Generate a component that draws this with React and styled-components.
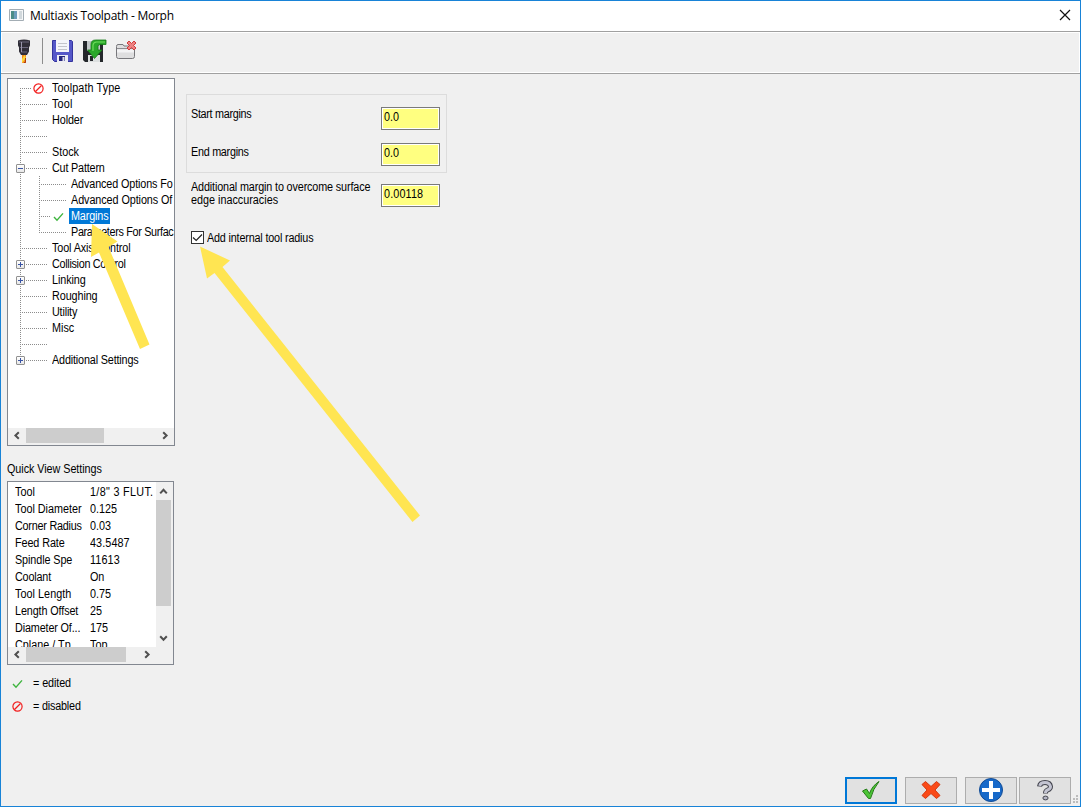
import React from 'react';
import styled, { createGlobalStyle, css } from 'styled-components';

const Global = createGlobalStyle`
  html, body { margin: 0; padding: 0; }
  body { width: 1081px; height: 807px; overflow: hidden; background: #f0f0f0; }
  * { box-sizing: border-box; }
`;

const Window = styled.div`
  position: relative;
  width: 1081px;
  height: 807px;
  border: 1px solid #1883d7;
  background: #f0f0f0;
  display: flex;
  flex-direction: column;
  font: 12px/16px "Liberation Sans", Arial, sans-serif;
  color: #000;
  overflow: hidden;
`;

const TitleBar = styled.header`
  height: 31px;
  flex: none;
  display: flex;
  align-items: center;
  padding: 0 9px 2px 8px;
  background: #fff;
  border-bottom: 1px solid #a0a0a0;
  svg { flex: none; display: block; }
`;

const Title = styled.h1`
  margin: 0 auto 0 6px;
  padding-top: 2px;
  font: 12px/16px "Open Sans", sans-serif;
  letter-spacing: -0.27px;
`;

const ToolBar = styled.div`
  height: 41px;
  flex: none;
  display: flex;
  align-items: center;
  padding: 0 0 4px 10px;
  border: 1px solid #fff;
  box-shadow: 0 1px #a0a0a0;
  svg { display: block; flex: none; }
`;

const Separator = styled.div`
  width: 1px;
  height: 26px;
  margin: 0 8px;
  background: #8d8d8d;
`;

const ToolIcon = styled.button`
  width: 24px;
  height: 24px;
  padding: 0;
  border: 0;
  margin-right: ${p => p.$gap || 0}px;
  background: none;
`;

const Body = styled.main`
  flex: 1;
  min-height: 0;
  display: flex;
  padding: 5px 9px 0 6px;
`;

const Sidebar = styled.aside`
  width: 168px;
  flex: none;
  display: flex;
  flex-direction: column;
`;

const Text = styled.span`
  display: inline-block;
  flex: none;
  white-space: pre;
  transform-origin: 0 50%;
  transform: scaleX(0.9);
  letter-spacing: ${p => p.$track || 0}px;
`;

const Panel = styled.section`
  width: ${p => p.$w}px;
  height: ${p => p.$h}px;
  flex: none;
  display: flex;
  flex-direction: column;
  background: #fff;
  border: 1px solid #828790;
  overflow: hidden;
`;

const TreeList = styled.div`
  flex: 1;
  padding-top: 1px;
`;

const TreeRow = styled.div`
  height: 16px;
  display: flex;
  align-items: center;
`;

const dotsDown = 'repeating-linear-gradient(to bottom, #8c8c8c 0 1px, transparent 1px 2px)';
const dotsAcross = 'repeating-linear-gradient(to right, #8c8c8c 0 1px, transparent 1px 2px)';

const Branch = styled.div`
  flex: none;
  height: 16px;
  width: ${p => p.$w}px;
  margin-left: ${p => p.$indent || 0}px;
  display: flex;
  align-items: center;
  background-repeat: no-repeat;
  background-image: ${dotsDown}, ${p => (p.$line ? dotsAcross : 'none')};
  background-size: 1px ${p => (p.$part ? '8px' : '16px')}, ${p => p.$line || 0}px 1px;
  background-position: 0 ${p => (p.$part === 'first' ? '8px' : '0')}, 0 8px;
  ${p => p.$mark && css`svg { margin-left: ${p.$mark}px; flex: none; }`}
`;

const Expander = styled.span`
  width: 9px;
  height: 9px;
  margin-left: -4px;
  margin-top: 1px;
  flex: none;
  border: 1px solid #919191;
  border-radius: 1px;
  background:
    linear-gradient(#3b55a5, #3b55a5) center / 5px 1px no-repeat,
    ${p => !p.$open && 'linear-gradient(#3b55a5, #3b55a5) center / 1px 5px no-repeat,'}
    linear-gradient(#fff, #e8e8e8);
`;

const TreeLabel = styled.span`
  height: 16px;
  width: ${p => (p.$selected ? '41px' : 'auto')};
  margin-left: 3px;
  padding-left: 2px;
  flex: none;
  display: flex;
  ${p => p.$selected && css`background: #0078d7; color: #fff;`}
`;

const ScrollBar = styled.div`
  flex: none;
  display: flex;
  flex-direction: ${p => (p.$vertical ? 'column' : 'row')};
  ${p => (p.$vertical ? 'width: 17px;' : 'height: 17px;')}
  background: #f0f0f0;
  svg { display: block; flex: none; }
`;

const Track = styled.div`
  flex: 1;
  display: flex;
  flex-direction: inherit;
`;

const Thumb = styled.div`
  background: #cdcdcd;
  ${p => (p.$vertical
    ? css`width: 15px; height: ${p.$size}px;`
    : css`height: 15px; width: ${p.$size}px;`)}
`;

const SectionTitle = styled.div`
  height: 35px;
  padding-top: 15px;
`;

const QuickView = styled.div`
  flex: 1;
  min-height: 0;
  display: flex;
`;

const SettingList = styled.div`
  flex: 1;
  min-width: 0;
  padding: 2px 0 0 7px;
  overflow: hidden;
`;

const Setting = styled.div`
  display: grid;
  grid-template-columns: 75px 1fr;
  height: 17px;
  line-height: 17px;
`;

const Legend = styled.div`
  height: ${p => p.$h}px;
  display: flex;
  align-items: center;
  padding-left: 5px;
  gap: 10px;
`;

const Form = styled.section`
  width: 262px;
  margin-left: 11px;
  padding-top: 16px;
`;

const Group = styled.div`
  width: 261px;
  height: 79px;
  margin-bottom: 11px;
  border: 1px solid #dcdcdc;
  padding: 12px 0 0 4px;
  display: flex;
  flex-direction: column;
  gap: 13px;
`;

const Field = styled.label`
  display: flex;
  height: 23px;
  padding-left: ${p => p.$inset || 0}px;
`;

const FieldName = styled.div`
  width: 190px;
  flex: none;
  display: flex;
  flex-direction: column;
  align-items: flex-start;
  margin-top: ${p => p.$shift}px;
  line-height: 13px;
`;

const Value = styled.div`
  width: 59px;
  height: 23px;
  line-height: 18px;
  padding-left: 2px;
  background: #ffff80;
  border: 1px solid #7a7a7a;
  box-shadow: inset 0 0 0 1px #fff;
`;

const Check = styled.label`
  display: flex;
  height: 13px;
  line-height: 14px;
  margin-top: 24px;
  padding-left: 5px;
  gap: 3px;
`;

const Box = styled.span`
  width: 13px;
  height: 13px;
  border: 1px solid #333;
  background: #fff;
  svg { display: block; }
`;

const Footer = styled.footer`
  flex: none;
  height: 29px;
  display: flex;
  justify-content: flex-end;
  padding-right: 2px;
`;

const Action = styled.button`
  width: 52px;
  height: 27px;
  padding: 0 0 1px;
  margin-left: ${p => p.$gap || 0}px;
  display: flex;
  align-items: center;
  justify-content: center;
  background: #e1e1e1;
  border: ${p => (p.$primary ? '2px solid #0078d7' : '1px solid #adadad')};
`;

const Grip = styled.div`
  width: 7px;
  display: flex;
  align-items: flex-end;
  padding: 0 0 2px 1px;
`;

const Pointers = styled.svg`
  position: absolute;
  left: -1px;
  top: -1px;
  pointer-events: none;
`;

const CheckMark = () => (
  <svg width="11" height="11" viewBox="0 0 11 11"><path d="M1 6l3 3.2L10 2.4" fill="none" stroke="#3fb53f" strokeWidth="1.4" /></svg>
);
const Disabled = () => (
  <svg width="11" height="11" viewBox="0 0 11 11" fill="none" stroke="#f21c1c" strokeWidth="1.2"><circle cx="5.5" cy="5.5" r="4.6" /><path d="M2.5 8.5l6-6" /></svg>
);

const chevrons = {
  left: 'M10.8 4.2L7.4 7.5l3.4 3.3',
  right: 'M6.2 4.2l3.4 3.3-3.4 3.3',
  up: 'M4.2 11.4L7.5 7.8l3.3 3.6',
  down: 'M4.2 5.2l3.3 3.6 3.3-3.6',
};
const Chevron = ({ dir, w = 17, h = 16 }) => (
  <svg width={w} height={h}><path d={chevrons[dir]} fill="none" stroke="#505050" strokeWidth="2" /></svg>
);

const tree = [
  { name: 'Toolpath Type', mark: 'off', track: 0.12 },
  { name: 'Tool', track: 0.2 },
  { name: 'Holder', track: -0.1 },
  { name: '' },
  { name: 'Stock' },
  { name: 'Cut Pattern', box: 'open', track: -0.2 },
  { name: 'Advanced Options Fo', child: true, track: -0.13 },
  { name: 'Advanced Options Of', child: true, track: -0.08 },
  { name: 'Margins', child: true, mark: 'on', selected: true, track: -0.15 },
  { name: 'Parameters For Surfac', child: true, end: true, track: -0.36 },
  { name: 'Tool Axis Control', track: -0.13 },
  { name: 'Collision Control', box: 'closed', track: -0.33 },
  { name: 'Linking', box: 'closed', track: -0.1 },
  { name: 'Roughing', track: -0.1 },
  { name: 'Utility', track: -0.2 },
  { name: 'Misc' },
  { name: '' },
  { name: 'Additional Settings', box: 'closed', track: -0.17 },
];

const settings = [
  { name: 'Tool', value: '1/8" 3 FLUT.', valueTrack: 0.35 },
  { name: 'Tool Diameter', value: '0.125' },
  { name: 'Corner Radius', value: '0.03', track: -0.25 },
  { name: 'Feed Rate', value: '43.5487', track: -0.1, valueTrack: 0.1 },
  { name: 'Spindle Spe', value: '11613', track: -0.1, valueTrack: 0.15 },
  { name: 'Coolant', value: 'On', track: -0.2, valueTrack: -0.2 },
  { name: 'Tool Length', value: '0.75', track: 0.05 },
  { name: 'Length Offset', value: '25', track: -0.12 },
  { name: 'Diameter Of...', value: '175', track: -0.15 },
  { name: 'Cplane / Tp', value: 'Top' },
];

const HolderIcon = () => (
  <svg width="24" height="24" viewBox="0 0 24 24">
    <path d="M6 1.500q6-2 12 0v5l-1 2v4l-2 3.500H9l-2-3.500v-4l-1-2z" fill="#302e38" />
    <path d="M7 3h10M8 8.500h8M9 13h6" stroke="#6a677c" />
    <path d="M9.500 3v10" stroke="#9a97ac" />
    <path d="M10 16h4v8h-4z" fill="#f08a1c" />
    <path d="M12.500 16L10 20v4l4-5" fill="#ffd83a" />
    <path d="M13.500 19v4.500H12" stroke="#b03a10" fill="none" />
  </svg>
);
const SaveIcon = () => (
  <svg width="24" height="24" viewBox="0 0 24 24">
    <path d="M1.500 1.500h19l1 1v20h-18l-2-2z" fill="#5557c8" stroke="#34349e" />
    <path d="M5 1h13v12H5z" fill="#f4f4fa" />
    <path d="M7 4.500h9M7 7.500h9M7 10.500h9" stroke="#c3c3cc" />
    <path d="M6 16h11v7H6z" fill="#ededf4" />
    <path d="M8 17h6v5H8z" fill="#26267c" />
    <path d="M11.500 18h2v4h-2z" fill="#dcdcea" />
  </svg>
);
const SaveAsIcon = () => (
  <svg width="24" height="24" viewBox="0 0 24 24">
    <path d="M0 2h20v21H2l-2-2z" fill="#24272b" />
    <path d="M4 2h13v10H4z" fill="#c3c8ca" />
    <path d="M5 16h12v7H5z" fill="#dde0e0" />
    <path d="M7 17h3v5H7z" fill="#24272b" />
    <path d="M8 11V5.500Q8 1 12.500 1H23v4.500h-6q-2 0-2 2V11h4l-7.500 8.500L4.500 11z" fill="#2aa82a" stroke="#147a14" strokeWidth=".8" />
    <path d="M10 12V6q.5-3 3.500-3H22" stroke="#6fdc5c" strokeWidth="1.2" fill="none" />
  </svg>
);
const CloseFileIcon = () => (
  <svg width="24" height="24" viewBox="0 0 24 24">
    <path d="M1.500 7.500q0-2 1.500-2h5l1 1.500h9q1.500 0 1.500 1.500v9q0 2-2 2h-14q-2 0-2-2z" fill="#dededf" stroke="#77777b" />
    <path d="M2 9.500h17" stroke="#8b8b8f" />
    <path d="M2 10.500h17v3H2z" fill="#f3f3f4" />
    <path d="M12 4l2-2 2.500 2.500L19 2l2 2-2.500 2.500L21 9l-2 2-2.500-2.500L14 11l-2-2 2.500-2.500z" fill="#ee8282" stroke="#d03b3b" />
  </svg>
);

export default function App() {
  return (
    <Window>
      <Global />
      <TitleBar>
        <svg width="15" height="12"><path d="M.5.5h14v11H.5z" fill="#f5f7f8" stroke="#a3adb4" /><path d="M2 2h6v8H2z" fill="#4a8c86" /><path d="M5 2h3v8H5z" fill="#6c9dbb" /><path d="M10 2h3v8h-3z" fill="#d1d8dc" /></svg>
        <Title>Multiaxis Toolpath - Morph</Title>
        <svg width="12" height="12"><path d="M1 1l10 10M11 1L1 11" stroke="#111" strokeWidth="1.2" /></svg>
      </TitleBar>
      <ToolBar>
        <ToolIcon $gap={-2}><HolderIcon /></ToolIcon>
        <Separator />
        <ToolIcon $gap={8}><SaveIcon /></ToolIcon>
        <ToolIcon $gap={8}><SaveAsIcon /></ToolIcon>
        <ToolIcon><CloseFileIcon /></ToolIcon>
      </ToolBar>
      <Body>
        <Sidebar>
          <Panel $w={168} $h={368}>
            <TreeList>
              {tree.map((n, i) => {
                const part = i === 0 ? 'first' : i === tree.length - 1 ? 'last' : undefined;
                const icon = n.mark === 'on' ? <CheckMark /> : n.mark === 'off' ? <Disabled /> : null;
                return (
                  <TreeRow key={i}>
                    {n.child ? (
                      <>
                        <Branch $indent={12} $w={19} />
                        <Branch $w={27} $line={n.mark ? 11 : 27} $part={n.end ? 'last' : undefined} $mark={n.mark && 14}>{icon}</Branch>
                      </>
                    ) : (
                      <Branch $indent={12} $w={27} $line={n.mark ? 11 : 27} $part={part} $mark={n.mark && 13}>
                        {n.box && <Expander $open={n.box === 'open'} />}
                        {icon}
                      </Branch>
                    )}
                    <TreeLabel $selected={n.selected}><Text $track={n.track}>{n.name}</Text></TreeLabel>
                  </TreeRow>
                );
              })}
            </TreeList>
            <ScrollBar>
              <Chevron dir="left" w={18} />
              <Track><Thumb $size={78} /></Track>
              <Chevron dir="right" />
            </ScrollBar>
          </Panel>
          <SectionTitle><Text $track={-0.06}>Quick View Settings</Text></SectionTitle>
          <Panel $w={167} $h={184}>
            <QuickView>
              <SettingList>
                {settings.map(s => (
                  <Setting key={s.name}>
                    <Text $track={s.track}>{s.name}</Text>
                    <Text $track={s.valueTrack}>{s.value}</Text>
                  </Setting>
                ))}
              </SettingList>
              <ScrollBar $vertical>
                <Chevron dir="up" h={18} />
                <Track><Thumb $vertical $size={106} /></Track>
                <Chevron dir="down" />
              </ScrollBar>
            </QuickView>
            <ScrollBar>
              <Chevron dir="left" w={18} />
              <Track><Thumb $size={100} /></Track>
              <Chevron dir="right" w={34} />
            </ScrollBar>
          </Panel>
          <Legend $h={36}><CheckMark /><Text $track={-0.1}>= edited</Text></Legend>
          <Legend $h={10}><Disabled /><Text $track={-0.2}>= disabled</Text></Legend>
        </Sidebar>
        <Form>
          <Group>
            <Field><FieldName $shift={1}><Text $track={-0.33}>Start margins</Text></FieldName><Value><Text>0.0</Text></Value></Field>
            <Field><FieldName $shift={3}><Text $track={-0.3}>End margins</Text></FieldName><Value><Text>0.0</Text></Value></Field>
          </Group>
          <Field $inset={5}>
            <FieldName $shift={-3}><Text $track={-0.15}>Additional margin to overcome surface</Text><Text>edge inaccuracies</Text></FieldName>
            <Value><Text $track={0.15}>0.00118</Text></Value>
          </Field>
          <Check>
            <Box><svg width="11" height="11"><path d="M1 5.500l3.200 3L10 2.500" fill="none" stroke="#222" strokeWidth="1.2" /></svg></Box>
            <Text $track={-0.19}>Add internal tool radius</Text>
          </Check>
        </Form>
      </Body>
      <Footer>
        <Action $primary><svg width="20" height="20" viewBox="0 0 20 20"><path d="M1.500 11l4-2 3 4.500Q11 6 18 1.500 12 9 9.500 18.500H7.500z" fill="#4bc436" stroke="#257a18" /></svg></Action>
        <Action $gap={8}><svg width="20" height="20" viewBox="0 0 20 20"><path d="M1 4.500L4.500 1.500 10 6.500l5.500-5L19 4.500 14 10l5 5.500-3.500 3-5.500-5-5.500 5-3.500-3L6 10z" fill="#fa4a18" stroke="#d43a10" strokeLinejoin="round" /></svg></Action>
        <Action $gap={8}><svg width="24" height="24" viewBox="0 0 24 24"><circle cx="12" cy="12" r="11.500" fill="#1769c9" stroke="#134c94" /><path d="M10 3h4v7h7v4h-7v7h-4v-7H3v-4h7z" fill="#fff" /></svg></Action>
        <Action $gap={2}><svg width="20" height="22" viewBox="0 0 20 22"><path d="M4.500 7.500Q5 3.500 10 3.500t5.500 4q0 2.500-3 3.500-2 .8-2 3.500" fill="none" stroke="#44454f" strokeWidth="5" /><path d="M4.700 6.800Q5.500 3.500 10 3.500t5.500 4q0 2.500-3 3.500-2 .8-2 3" fill="none" stroke="#c3c4d2" strokeWidth="3" /><ellipse cx="10.500" cy="19" rx="2.600" ry="1.900" fill="#b4b5c4" stroke="#44454f" /></svg></Action>
        <Grip><svg width="6" height="9" fill="#bcbcbc"><path d="M4 0h2v2H4zM1 3h2v2H1zM4 3h2v2H4zM1 6h2v2H1zM4 6h2v2H4z" /></svg></Grip>
      </Footer>
      <Pointers width="1081" height="807" fill="#ffe552">
        <path d="M92 224L117.500 241.500 108.500 247 149.500 344.500 140 349 99 252.500 91 257z" />
        <path d="M200 246.500L230 260.500 222.500 267 420 515.500 412.500 522 214.500 273 207 278.500z" />
      </Pointers>
    </Window>
  );
}
